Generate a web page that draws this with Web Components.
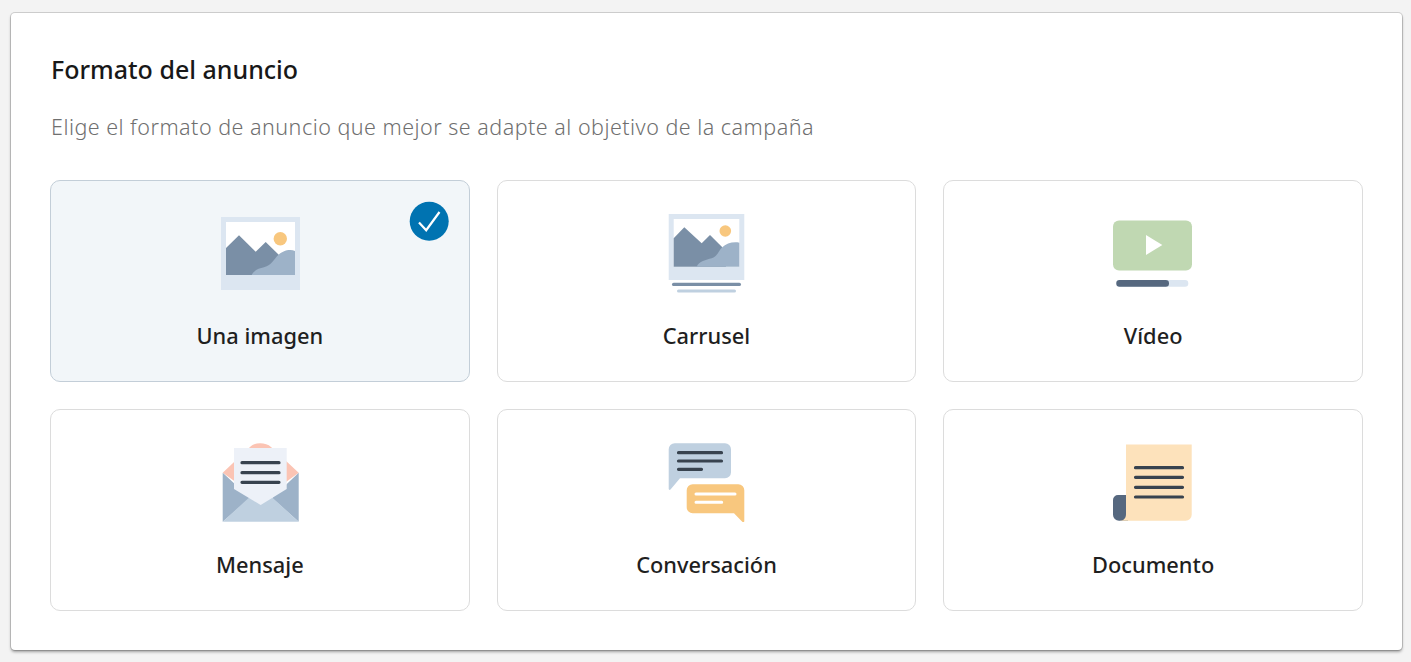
<!DOCTYPE html>
<html lang="es">
<head>
<meta charset="utf-8">
<title>Formato del anuncio</title>
<style>
    html, body { margin: 0; height: 100%; }
    body {
        background: #f3f3f3;
        font-family: "Noto Sans", "Open Sans", "Liberation Sans", sans-serif;
        padding: 13px 9px 12px 11px;
        box-sizing: border-box;
    }
</style>
</head>
<body>
<format-panel heading="Formato del anuncio" description="Elige el formato de anuncio que mejor se adapte al objetivo de la campaña">
    <format-tile label="Una imagen" icon="image" selected></format-tile>
    <format-tile label="Carrusel" icon="carousel"></format-tile>
    <format-tile label="Vídeo" icon="video"></format-tile>
    <format-tile label="Mensaje" icon="message"></format-tile>
    <format-tile label="Conversación" icon="conversation"></format-tile>
    <format-tile label="Documento" icon="document"></format-tile>
</format-panel>
<script>
"use strict";

const icons = {
    image: `<svg viewBox="220 213 80 80">
        <rect x="221" y="217" width="79" height="73" fill="#dce6f1"/>
        <rect x="226" y="222" width="69" height="53" fill="#fff"/>
        <path d="M226 248 239 235.3 255.7 251.7 265.7 242 279 255 283 275H226Z" fill="#7a8fa6"/>
        <path d="M251.7 275C254 270 259 268.5 264 267.3 272 265 274 259 278.3 255 282 251 290 248.5 295 251V275Z" fill="#9db2c8"/>
        <circle cx="280.3" cy="238.7" r="6.7" fill="#f8c77e"/>
    </svg>`,
    carousel: `<svg viewBox="666 213 80 80">
        <rect x="668.7" y="214" width="75.6" height="66" fill="#dce6f1"/>
        <rect x="673.7" y="219" width="65.6" height="47.7" fill="#fff"/>
        <path d="M673.7 238.3 684.3 227.3 701.7 243.3 710 235 722.3 247.3 726 266.7H673.7Z" fill="#7a8fa6"/>
        <path d="M696.7 266.7C699 261 706 260 711.7 258.3 718 256 719 250 722.3 247.3 726 243.5 733 241.5 739.3 242.7V266.7Z" fill="#9db2c8"/>
        <circle cx="725.3" cy="231" r="5.8" fill="#f8c77e"/>
        <rect x="672" y="282.8" width="69" height="3.2" rx="1.6" fill="#7a8fa6"/>
        <rect x="677" y="289.5" width="59" height="3" rx="1.5" fill="#bfd0e0"/>
    </svg>`,
    video: `<svg viewBox="1113 213 80 80">
        <rect x="1113" y="220.5" width="79" height="50" rx="6" fill="#c0d8b2"/>
        <path d="M1146 235 1162.3 245 1146 255Z" fill="#fff"/>
        <rect x="1116.3" y="280" width="72" height="6.7" rx="3.3" fill="#dce6f1"/>
        <rect x="1116.3" y="280" width="52.7" height="6.7" rx="3.3" fill="#56687f"/>
    </svg>`,
    message: `<svg viewBox="220 442 80 80">
        <path d="M222.7 472.7 250 447C254 442 266 442 271 447L298.7 472.7 261 500Z" fill="#fbc4b4"/>
        <path d="M222.7 472.7 250 498 222.7 521.7Z M298.7 472.7 272 498 298.7 521.7Z" fill="#9db2c8"/>
        <path d="M222.7 521.7 260.7 487 298.7 521.7Z" fill="#bfd0e0"/>
        <path d="M234 448H286.7V489L260.7 505 234 489Z" fill="#edf1f8"/>
        <path d="M242 462.7H279M242 472.7H279M242 482.3H279" stroke="#38434f" stroke-width="3.2" stroke-linecap="round" fill="none"/>
    </svg>`,
    conversation: `<svg viewBox="666 442 80 80">
        <path d="M674.7 443.3H725A6 6 0 0 1 731 449.3V472.3A6 6 0 0 1 725 478.3H680L670.5 489.5C669.8 490.3 668.7 489.8 668.7 488.8V449.3A6 6 0 0 1 674.7 443.3Z" fill="#bfd0e0"/>
        <path d="M678.5 452.7H721.5M678.5 461H721.5M678.5 469.3H701.5" stroke="#38434f" stroke-width="3.2" stroke-linecap="round" fill="none"/>
        <path d="M692.7 484.3H738.3A6 6 0 0 1 744.3 490.3V521C744.3 522.3 743.3 522.7 742.5 522L734 513.3H692.7A6 6 0 0 1 686.7 507.3V490.3A6 6 0 0 1 692.7 484.3Z" fill="#f8c77e"/>
        <path d="M696 494H735M696 502.3H721.7" stroke="#fff" stroke-width="3" stroke-linecap="round" fill="none"/>
    </svg>`,
    document: `<svg viewBox="1113 442 80 80">
        <path d="M1118 495H1128V520.7H1119A6 6 0 0 1 1113 514.7V500A5 5 0 0 1 1118 495Z" fill="#56687f"/>
        <path d="M1126 444.5H1191.7V514.7A6 6 0 0 1 1185.7 520.7H1119.5C1124 520.7 1126 518 1126 514Z" fill="#fde2bb"/>
        <path d="M1135.5 467.7H1182.5M1135.5 477.3H1182.5M1135.5 487.3H1182.5M1135.5 497H1182.5" stroke="#38434f" stroke-width="3.2" stroke-linecap="round" fill="none"/>
    </svg>`
};

const panelTemplate = document.createElement("template");
panelTemplate.innerHTML = `
    <style>
        :host {
            display: block;
            box-sizing: border-box;
            height: 637px;
            padding: 38px 39px 39px 39px;
            background: #fff;
            border-radius: 4px;
            box-shadow: 0 0 0 1px rgba(0, 0, 0, .15), 0 2px 3px rgba(0, 0, 0, .35);
        }
        h2 {
            margin: 0 0 0 1px;
            font-size: 25px;
            line-height: 36px;
            font-weight: 500;
            color: #181818;
        }
        p {
            margin: 25px 0 0 1px;
            font-size: 21.5px;
            line-height: 30px;
            letter-spacing: .49px;
            font-weight: 300;
            color: #6f6f6f;
        }
        .grid {
            display: grid;
            grid-template-columns: repeat(3, 1fr);
            grid-auto-rows: 202px;
            gap: 27px;
            margin-top: 38px;
        }
    </style>
    <h2></h2>
    <p></p>
    <div class="grid"><slot></slot></div>
`;

class FormatPanel extends HTMLElement {
    constructor() {
        super();
        this.shadowDom = this.attachShadow({mode: "open"});
        this.shadowDom.append(panelTemplate.content.cloneNode(true));
    }

    connectedCallback() {
        this.shadowDom.querySelector("h2").textContent = this.getAttribute("heading");
        this.shadowDom.querySelector("p").textContent = this.getAttribute("description");
    }
}

const tileTemplate = document.createElement("template");
tileTemplate.innerHTML = `
    <style>
        :host {
            display: flex;
            flex-direction: column;
            align-items: center;
            position: relative;
            box-sizing: border-box;
            padding-top: 32px;
            background: #fff;
            border: 1px solid #dcdcdc;
            border-radius: 10px;
        }
        :host([selected]) {
            background: #f2f6f9;
            border-color: #c3ced8;
        }
        .icon {
            display: block;
            width: 80px;
            height: 80px;
        }
        .icon svg {
            display: block;
            width: 100%;
            height: 100%;
        }
        .label {
            margin-top: 27px;
            font-size: 21.8px;
            line-height: 32px;
            font-weight: 500;
            color: #1f1f1f;
        }
        .check {
            display: none;
            position: absolute;
            top: 20px;
            right: 20px;
            width: 40px;
            height: 40px;
        }
        :host([selected]) .check {
            display: block;
        }
    </style>
    <span class="icon"></span>
    <span class="label"></span>
    <svg class="check" viewBox="0 0 40 40">
        <circle cx="20.2" cy="20.2" r="19.5" fill="#0073b1"/>
        <path d="M10 21.5 17.2 29.2 30.5 11" stroke="#fff" stroke-width="2.2" fill="none"/>
    </svg>
`;

class FormatTile extends HTMLElement {
    constructor() {
        super();
        this.shadowDom = this.attachShadow({mode: "open"});
        this.shadowDom.append(tileTemplate.content.cloneNode(true));
    }

    connectedCallback() {
        this.shadowDom.querySelector(".icon").innerHTML = icons[this.getAttribute("icon")];
        this.shadowDom.querySelector(".label").textContent = this.getAttribute("label");
    }
}

window.customElements.define("format-panel", FormatPanel);
window.customElements.define("format-tile", FormatTile);
</script>
</body>
</html>
